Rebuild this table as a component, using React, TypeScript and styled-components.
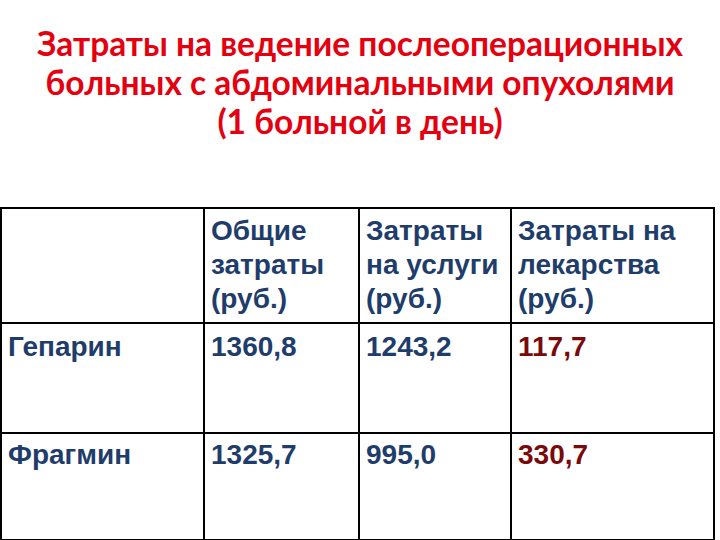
import React from "react";
import styled, { createGlobalStyle } from "styled-components";

const Global = createGlobalStyle`
  html, body {
    margin: 0;
    padding: 0;
    background: #fff;
  }
`;

type Row = { name: string; total: string; services: string; drugs: string };

const rows: Row[] = [
  { name: "Гепарин", total: "1360,8", services: "1243,2", drugs: "117,7" },
  { name: "Фрагмин", total: "1325,7", services: "995,0", drugs: "330,7" },
];

export default function App() {
  return (
    <>
      <Global />
      <Slide>
        <Title>
          Затраты на ведение послеоперационных
          <br />
          больных с абдоминальными опухолями
          <br />
          (1 больной в день)
        </Title>
        <Table>
          <colgroup>
            <col style={{ width: 203 }} />
            <col style={{ width: 155 }} />
            <col style={{ width: 152 }} />
            <col style={{ width: 203 }} />
          </colgroup>
          <tbody>
            <HeadRow>
              <HeadCell />
              <HeadCell>
                Общие
                <br />
                затраты
                <br />
                (руб.)
              </HeadCell>
              <HeadCell>
                Затраты
                <br />
                на услуги
                <br />
                (руб.)
              </HeadCell>
              <HeadCell>
                Затраты на
                <br />
                лекарства
                <br />
                (руб.)
              </HeadCell>
            </HeadRow>
            {rows.map((r, i) => (
              <BodyRow key={r.name} $h={i === 0 ? 110 : 107} $pad={i === 0 ? 9 : 7}>
                <Cell>{r.name}</Cell>
                <Cell>{r.total}</Cell>
                <Cell>{r.services}</Cell>
                <Cell $accent>{r.drugs}</Cell>
              </BodyRow>
            ))}
          </tbody>
        </Table>
      </Slide>
    </>
  );
}

const Slide = styled.div`
  width: 720px;
  height: 540px;
  overflow: hidden;
  display: flex;
  flex-direction: column;
  align-items: flex-start;
`;

const Title = styled.h1`
  margin: 24px 0 0;
  width: 720px;
  text-align: center;
  font-family: "Lato", "Liberation Sans", sans-serif;
  font-weight: 700;
  font-size: 33.5px;
  line-height: 39px;
  color: #e4000f;
`;

const Table = styled.table`
  margin-top: 66px;
  width: 714px;
  border-collapse: collapse;
  table-layout: fixed;
  font-family: "Liberation Sans", Arial, sans-serif;
  font-weight: 700;
  font-size: 28px;
  color: #1f3d6b;

  td {
    border: 2px solid #000;
  }
`;

const HeadRow = styled.tr`
  height: 115px;
`;

const BodyRow = styled.tr<{ $h: number; $pad: number }>`
  height: ${({ $h }) => $h}px;

  td {
    padding-top: ${({ $pad }) => $pad}px;
  }
`;

const HeadCell = styled.td`
  vertical-align: top;
  padding: 5px 0 0 6px;
  line-height: 34px;
`;

const Cell = styled.td<{ $accent?: boolean }>`
  vertical-align: top;
  padding-left: 6px;
  line-height: 28px;
  color: ${({ $accent }) => ($accent ? "#7a0a0a" : "#1f3d6b")};
`;
